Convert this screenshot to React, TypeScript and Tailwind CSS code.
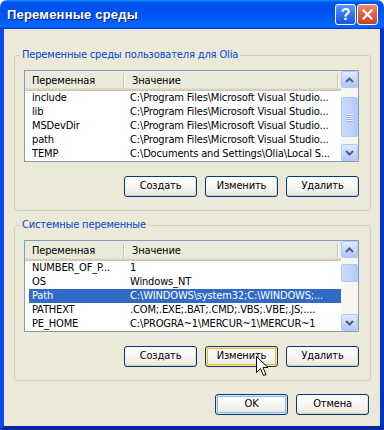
import type { ReactNode } from 'react'

type Row = [string, string]

const userVars: Row[] = [
  ['include', 'C:\\Program Files\\Microsoft Visual Studio...'],
  ['lib', 'C:\\Program Files\\Microsoft Visual Studio...'],
  ['MSDevDir', 'C:\\Program Files\\Microsoft Visual Studio...'],
  ['path', 'C:\\Program Files\\Microsoft Visual Studio...'],
  ['TEMP', 'C:\\Documents and Settings\\Olia\\Local S...'],
]

const systemVars: Row[] = [
  ['NUMBER_OF_P...', '1'],
  ['OS', 'Windows_NT'],
  ['Path', 'C:\\WINDOWS\\system32;C:\\WINDOWS;...'],
  ['PATHEXT', '.COM;.EXE;.BAT;.CMD;.VBS;.VBE;.JS;....'],
  ['PE_HOME', 'C:\\PROGRA~1\\MERCUR~1\\MERCUR~1'],
]

export default function App() {
  return (
    <div className="relative flex h-[430px] w-[384px] flex-col overflow-hidden rounded-t-[7px] font-['DejaVu_Sans_Condensed','Liberation_Sans',sans-serif] text-[11px] tracking-[-0.15px] text-black">
      <TitleBar />
      <div className="flex flex-1 flex-col border-x-[4px] border-b-[4px] border-b-[#0027A6] border-l-[#0A4BEA] border-r-[#0035C4] bg-[#ECE9D8] pl-[10px] pt-[26px]">
        <GroupBox label="Переменные среды пользователя для Olia">
          <ListView rows={userVars} thumbTop={9} thumbHeight={40} />
        </GroupBox>
        <div className="mt-[14px]">
          <GroupBox label="Системные переменные" hot>
            <ListView rows={systemVars} selected={2} thumbTop={6} thumbHeight={18} />
          </GroupBox>
        </div>
        <div className="mt-[13px] flex w-[355px] justify-end gap-[8px]">
          <XpButton variant="default">OK</XpButton>
          <XpButton>Отмена</XpButton>
        </div>
      </div>
      <Cursor />
    </div>
  )
}

function TitleBar() {
  return (
    <div className="flex h-[29px] shrink-0 items-center justify-between bg-[linear-gradient(to_bottom,#0997FF_0%,#0053EE_8%,#0050EE_40%,#0066FF_88%,#0066FF_93%,#005BFF_95%,#003DD7_96%,#003DD7_100%)] pl-[7px] pr-[6px]">
      <span className="font-['Liberation_Sans',sans-serif] text-[13px] font-bold tracking-[0.2px] text-white [text-shadow:1px_1px_#0A1E8C]">
        Переменные среды
      </span>
      <div className="flex gap-[1px]">
        <div className="flex h-[21px] w-[21px] items-center justify-center rounded-[3px] border border-white bg-[linear-gradient(to_bottom,#5A9BFF,#2C6AF0_60%,#1E55DA)] font-['Liberation_Sans',sans-serif] text-[16px] font-bold leading-none text-white">
          ?
        </div>
        <div className="flex h-[21px] w-[21px] items-center justify-center rounded-[3px] border border-white bg-[linear-gradient(to_bottom,#F08A6C,#E0593A_55%,#C9411F)]">
          <svg width="11" height="11" viewBox="0 0 11 11">
            <path d="M1.5 1.5 L9.5 9.5 M9.5 1.5 L1.5 9.5" stroke="white" strokeWidth="2.2" strokeLinecap="square" />
          </svg>
        </div>
      </div>
    </div>
  )
}

function GroupBox({ label, hot, children }: { label: string; hot?: boolean; children: ReactNode }) {
  return (
    <div className="relative flex h-[156px] w-[357px] flex-col rounded-[3px] border border-[#D0D0BF] pb-[13px] pl-[9px] pr-[11px] pt-[14px]">
      <span className="absolute left-[5px] top-[-8px] bg-[#ECE9D8] px-[2px] leading-[13px] text-[#0046D5]">{label}</span>
      {children}
      <div className="mt-[14px] flex justify-end gap-[8px]">
        <XpButton>Создать</XpButton>
        <XpButton variant={hot ? 'hot' : undefined}>Изменить</XpButton>
        <XpButton>Удалить</XpButton>
      </div>
    </div>
  )
}

function ListView({
  rows,
  selected,
  thumbTop,
  thumbHeight,
}: {
  rows: Row[]
  selected?: number
  thumbTop: number
  thumbHeight: number
}) {
  return (
    <div className="flex h-[92px] border border-[#7F9DB9] bg-white">
      <div className="flex min-w-0 flex-1 flex-col">
        <div className="flex h-[20px] items-center bg-[#EBEADB] shadow-[inset_0_-1px_0_#CBC7B8,inset_0_-2px_0_#D6D2C2,inset_0_-3px_0_#E2DECD]">
          <span className="w-[98px] pl-[7px]">Переменная</span>
          <span className="h-[14px] w-[2px] border-l border-r border-l-[#C7C5B2] border-r-white" />
          <span className="flex-1 pl-[7px]">Значение</span>
          <span className="mr-[2px] h-[14px] w-[2px] border-l border-r border-l-[#C7C5B2] border-r-white" />
        </div>
        {rows.map(([name, value], i) => (
          <div
            key={name}
            className={`ml-[4px] flex h-[14px] items-center whitespace-nowrap ${
              i === selected ? 'bg-[#316AC5] text-white' : ''
            }`}
          >
            <span className="w-[95px] overflow-hidden pl-[3px]">{name}</span>
            <span className="flex-1 overflow-hidden pl-[6px]">{value}</span>
          </div>
        ))}
      </div>
      <div className="flex w-[17px] shrink-0 flex-col bg-[#F7F6F1]">
        <ScrollButton dir="up" />
        <div className="flex-1">
          <div style={{ marginTop: thumbTop, height: thumbHeight }} className="flex items-center justify-center rounded-[2px] border border-[#B4C8F6] bg-[linear-gradient(to_right,#CADAFC,#C2D3FC_50%,#B6C9F7)]">
            {thumbHeight > 24 && (
              <div className="flex flex-col gap-[1px]">
                {[0, 1, 2, 3].map((k) => (
                  <span key={k} className="h-[1px] w-[7px] bg-[#EEF4FE] shadow-[0_1px_0_#8CB0F8]" />
                ))}
              </div>
            )}
          </div>
        </div>
        <ScrollButton dir="down" />
      </div>
    </div>
  )
}

function ScrollButton({ dir }: { dir: 'up' | 'down' }) {
  return (
    <div className="flex h-[17px] w-[17px] items-center justify-center rounded-[2px] border border-[#B4C8F6] bg-[linear-gradient(to_bottom,#E1EAFE,#C3D4FC_60%,#B3C7F6)]">
      <svg width="9" height="6" viewBox="0 0 9 6">
        <path
          d={dir === 'up' ? 'M1 5 L4.5 1.5 L8 5' : 'M1 1 L4.5 4.5 L8 1'}
          fill="none"
          stroke="#4D6185"
          strokeWidth="2"
        />
      </svg>
    </div>
  )
}

function XpButton({ children, variant }: { children: ReactNode; variant?: 'hot' | 'default' }) {
  const ring =
    variant === 'hot'
      ? 'shadow-[inset_0_0_0_1px_#FFE7A2,inset_0_0_0_2px_#F8B330]'
      : variant === 'default'
        ? 'shadow-[inset_0_0_0_1px_#CEE7FF,inset_0_0_0_2px_#94B6F2]'
        : 'shadow-[inset_0_-1px_0_#D6D0C5,inset_-1px_0_0_#E3E0D6]'
  return (
    <div
      className={`flex h-[21px] w-[73px] items-center justify-center rounded-[3px] border border-[#003C74] bg-[linear-gradient(to_bottom,#FFFFFF,#F3F2EE_70%,#E6E3DA)] ${ring}`}
    >
      {children}
    </div>
  )
}

function Cursor() {
  return (
    <svg className="absolute left-[256px] top-[356px]" width="13" height="21" viewBox="0 0 13 21">
      <path
        d="M0.5 0.5 L0.5 16.5 L4.5 12.5 L7.5 19.5 L10 18.5 L7 11.5 L12 11.5 Z"
        fill="white"
        stroke="black"
        strokeWidth="1"
        strokeLinejoin="miter"
      />
    </svg>
  )
}
